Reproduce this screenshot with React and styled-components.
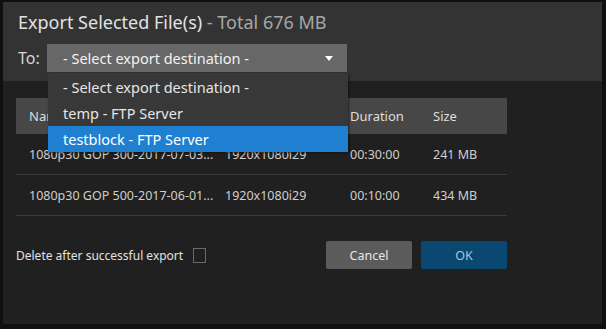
import styled, { createGlobalStyle } from "styled-components";

const GlobalStyle = createGlobalStyle`
  html, body {
    margin: 0;
    padding: 0;
    background: #0f0f10;
    width: 606px;
    height: 329px;
    overflow: hidden;
  }
  body {
    font-family: "Noto Sans", "Open Sans", sans-serif;
  }
`;

const Screen = styled.div`
  padding: 2px 4px 5px 3px;
  width: 606px;
  height: 329px;
  box-sizing: border-box;
`;

const Dialog = styled.div`
  position: relative;
  width: 599px;
  height: 322px;
  background: #202020;
  display: flex;
  flex-direction: column;
`;

const Header = styled.div`
  background: #333333;
  height: 79px;
  box-sizing: border-box;
  padding: 7px 15px 0 15px;
`;

const Title = styled.h2`
  margin: 0;
  font-size: 18px;
  font-weight: 400;
  color: #e2e2e2;
  line-height: 26px;

  & span {
    color: #a8a8a8;
  }
`;

const ToRow = styled.div`
  display: flex;
  align-items: center;
  gap: 6px;
  margin-top: 9px;
`;

const ToLabel = styled.label`
  font-size: 16px;
  color: #d6d6d6;
  width: 23px;
`;

const SelectWrap = styled.div`
  position: relative;
  width: 300px;
`;

const SelectBox = styled.div`
  height: 28px;
  background: #676767;
  display: flex;
  align-items: center;
  justify-content: space-between;
  padding: 0 14px 0 16px;
  color: #f2f2f2;
  font-size: 14.5px;
`;

const Caret = styled.span`
  width: 0;
  height: 0;
  border-left: 4px solid transparent;
  border-right: 4px solid transparent;
  border-top: 5px solid #ffffff;
`;

const Menu = styled.ul`
  position: absolute;
  top: 29px;
  left: 1px;
  width: 300px;
  margin: 0;
  padding: 1px 0 0;
  list-style: none;
  background: #383838;
  box-shadow: 1px 1px 2px rgba(0, 0, 0, 0.5);
  z-index: 2;
`;

const MenuItem = styled.li`
  height: 26px;
  line-height: 26px;
  padding-left: 15px;
  font-size: 14.5px;
  color: ${(p) => (p.$active ? "#ffffff" : "#e6e6e6")};
  background: ${(p) => (p.$active ? "#1f7fd0" : "transparent")};
`;

const Body = styled.div`
  flex: 1;
  padding: 17px 95px 0 13px;
`;

const Table = styled.table`
  width: 491px;
  table-layout: fixed;
  border-collapse: collapse;
  font-size: 12.5px;
  color: #cfcfcf;

  & th {
    background: #474747;
    height: 36px;
    text-align: left;
    font-weight: 400;
    font-size: 13px;
    color: #dedede;
    padding: 0;
  }

  & td {
    height: 40px;
    padding: 0;
    border-bottom: 1px solid #3a3a3a;
    white-space: nowrap;
    overflow: hidden;
  }

  & th:first-child,
  & td:first-child {
    padding-left: 13px;
  }
`;

const Footer = styled.div`
  display: flex;
  align-items: center;
  justify-content: space-between;
  padding: 0 95px 55px 13px;
`;

const CheckLabel = styled.label`
  display: flex;
  align-items: center;
  gap: 10px;
  font-size: 12px;
  color: #e2e2e2;
`;

const Checkbox = styled.span`
  width: 11px;
  height: 13px;
  border: 1px solid #6a6a6a;
`;

const Buttons = styled.div`
  display: flex;
  gap: 9px;
`;

const Button = styled.button`
  width: 86px;
  height: 28px;
  border: none;
  border-radius: 2px;
  font-family: inherit;
  font-size: 12.5px;
  background: ${(p) => (p.$primary ? "#0a4872" : "#5b5b5b")};
  color: ${(p) => (p.$primary ? "#a9c3d6" : "#e6e6e6")};
`;

const files = [
  { name: "1080p30 GOP 300-2017-07-03...", res: "1920x1080i29", dur: "00:30:00", size: "241 MB" },
  { name: "1080p30 GOP 500-2017-06-01...", res: "1920x1080i29", dur: "00:10:00", size: "434 MB" },
];

const destinations = ["- Select export destination -", "temp - FTP Server", "testblock - FTP Server"];

export default function App() {
  return (
    <>
      <GlobalStyle />
      <Screen>
        <Dialog>
          <Header>
            <Title>
              Export Selected File(s) <span>- Total 676 MB</span>
            </Title>
            <ToRow>
              <ToLabel>To:</ToLabel>
              <SelectWrap>
                <SelectBox>
                  - Select export destination -
                  <Caret />
                </SelectBox>
                <Menu>
                  {destinations.map((d, i) => (
                    <MenuItem key={d} $active={i === 2}>
                      {d}
                    </MenuItem>
                  ))}
                </Menu>
              </SelectWrap>
            </ToRow>
          </Header>
          <Body>
            <Table>
              <colgroup>
                <col style={{ width: 209 }} />
                <col style={{ width: 125 }} />
                <col style={{ width: 83 }} />
                <col style={{ width: 74 }} />
              </colgroup>
              <thead>
                <tr>
                  <th>Name</th>
                  <th>Resolution</th>
                  <th>Duration</th>
                  <th>Size</th>
                </tr>
              </thead>
              <tbody>
                {files.map((f) => (
                  <tr key={f.name}>
                    <td>{f.name}</td>
                    <td>{f.res}</td>
                    <td>{f.dur}</td>
                    <td>{f.size}</td>
                  </tr>
                ))}
              </tbody>
            </Table>
          </Body>
          <Footer>
            <CheckLabel>
              Delete after successful export
              <Checkbox />
            </CheckLabel>
            <Buttons>
              <Button>Cancel</Button>
              <Button $primary>OK</Button>
            </Buttons>
          </Footer>
        </Dialog>
      </Screen>
    </>
  );
}
